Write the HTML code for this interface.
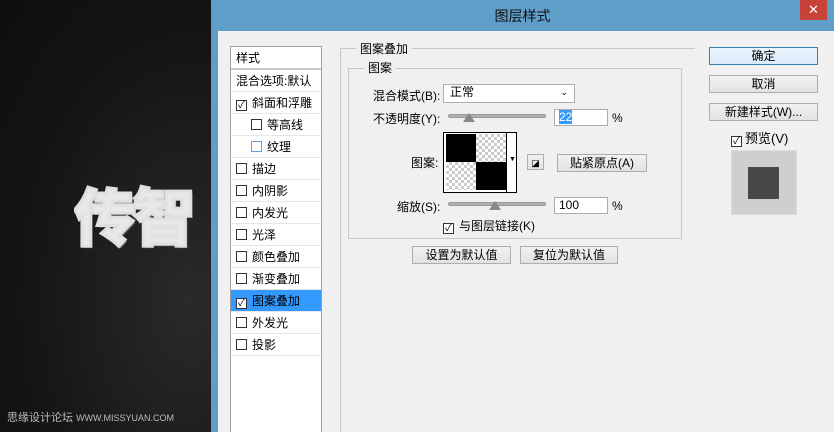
<!DOCTYPE html>
<html><head><meta charset="utf-8"><style>
*{margin:0;padding:0;box-sizing:border-box}
body{width:834px;height:432px;overflow:hidden;position:relative;background:#161616;font-family:"Liberation Sans","Noto Sans CJK SC",sans-serif;font-size:12px;color:#000}
.a{position:absolute}
.bg{left:0;top:0;width:211px;height:432px;background:radial-gradient(ellipse at 90% 70%,#2a2a2a,#151515 60%,#0e0e0e)}
.big{left:74px;top:168px;font-size:62px;font-weight:900;color:#e8e8e8;letter-spacing:-3px;font-family:"Noto Sans CJK SC",sans-serif;-webkit-text-stroke:3px #e0e0e0;text-shadow:2px 2px 0 #666;width:137px;overflow:hidden;white-space:nowrap}
.wm{left:7px;top:409px;color:#bbb;font-size:11px;white-space:nowrap}
.dlg{left:211px;top:0;width:623px;height:432px;background:#5e9ec9}
.title{left:211px;top:6px;width:623px;text-align:center;font-size:14px;color:#111}
.close{left:800px;top:0;width:27px;height:20px;background:#c7433a;color:#fff;text-align:center;font-size:13px;line-height:20px}
.cont{left:218px;top:31px;width:616px;height:401px;background:#f0f0f0}
.list{left:230px;top:46px;width:92px;height:386px;background:#fff;border:1px solid #a0a0a0;border-bottom:none}
.row{position:absolute;left:0;width:90px;height:22px;line-height:22px;padding-left:5px;border-bottom:1px solid #e6e6e6;white-space:nowrap;font-size:12px}
.cb{display:inline-block;width:11px;height:11px;border:1px solid #333;background:#fff;vertical-align:-1px;margin-right:5px;font-size:10px;line-height:9px;text-align:center}
.sel{background:#3399ff}
fieldset{position:absolute;border:1px solid #c8c8c8}
.lg{position:absolute;background:#f0f0f0;padding:0 4px;font-size:12px}
.btn{position:absolute;border:1px solid #adadad;background:linear-gradient(#f2f2f2,#e2e2e2);text-align:center;font-size:12px;line-height:16px}
.inp{position:absolute;background:#fff;border:1px solid #abadb3;font-size:12px;line-height:15px;padding-left:4px}
.slider{position:absolute;height:4px;background:#b0b0b0;border:1px solid #999;border-radius:2px}
.thumb{position:absolute;width:0;height:0;border-left:6px solid transparent;border-right:6px solid transparent;border-bottom:9px solid #888}
.chk{background:repeating-conic-gradient(#ccc 0 25%,#fff 0 50%) 0 0/6px 6px}
</style></head><body>
<div class="a bg"></div>
<div class="a big">传智</div>
<div class="a wm">思缘设计论坛 <span style="font-size:9px">WWW.MISSYUAN.COM</span></div>
<div class="a dlg"></div>
<div class="a title">图层样式</div>
<div class="a close">✕</div>
<div class="a cont"></div>
<div class="a list">
<div class="row" style="top:0;height:23px;border-bottom:2px solid #ccc">样式</div>
<div class="row" style="top:23px">混合选项:默认</div>
<div class="row" style="top:45px"><span class="cb">✓</span>斜面和浮雕</div>
<div class="row" style="top:67px;padding-left:20px"><span class="cb"></span>等高线</div>
<div class="row" style="top:89px;padding-left:20px"><span class="cb" style="border-color:#6aa0d8"></span>纹理</div>
<div class="row" style="top:111px"><span class="cb"></span>描边</div>
<div class="row" style="top:133px"><span class="cb"></span>内阴影</div>
<div class="row" style="top:155px"><span class="cb"></span>内发光</div>
<div class="row" style="top:177px"><span class="cb"></span>光泽</div>
<div class="row" style="top:199px"><span class="cb"></span>颜色叠加</div>
<div class="row" style="top:221px"><span class="cb"></span>渐变叠加</div>
<div class="row sel" style="top:243px"><span class="cb">✓</span>图案叠加</div>
<div class="row" style="top:265px"><span class="cb"></span>外发光</div>
<div class="row" style="top:287px"><span class="cb"></span>投影</div>
</div>
<div class="a" style="left:340px;top:48px;width:355px;height:1px;background:#c8c8c8"></div>
<div class="a" style="left:340px;top:48px;width:1px;height:384px;background:#c8c8c8"></div>
<div class="lg" style="left:356px;top:40px">图案叠加</div>
<fieldset style="left:348px;top:68px;width:334px;height:171px"></fieldset>
<div class="lg" style="left:364px;top:59px">图案</div>
<div class="a" style="left:373px;top:87px">混合模式(B):</div>
<div class="inp" style="left:443px;top:84px;width:132px;height:19px;padding-left:6px">正常<span style="position:absolute;right:6px;top:0;font-size:9px">⌄</span></div>
<div class="a" style="left:373px;top:110px">不透明度(Y):</div>
<div class="slider" style="left:448px;top:114px;width:98px"></div>
<div class="thumb" style="left:463px;top:113px"></div>
<div class="inp" style="left:554px;top:109px;width:54px;height:17px"><span style="background:#3399ff;color:#fff">22</span></div>
<div class="a" style="left:612px;top:111px">%</div>
<div class="a" style="left:411px;top:154px">图案:</div>
<div class="a" style="left:443px;top:132px;width:74px;height:61px;border:1px solid #000;background:#fff"></div>
<div class="a" style="left:446px;top:134px;width:60px;height:56px">
<div class="a" style="left:0;top:0;width:30px;height:28px;background:#000"></div>
<div class="a chk" style="left:30px;top:0;width:30px;height:28px"></div>
<div class="a chk" style="left:0;top:28px;width:30px;height:28px"></div>
<div class="a" style="left:30px;top:28px;width:30px;height:28px;background:#000"></div>
</div>
<div class="a" style="left:506px;top:132px;width:1px;height:61px;background:#000"></div>
<div class="a" style="left:509px;top:156px;font-size:7px">▼</div>
<div class="btn" style="left:527px;top:154px;width:17px;height:16px;font-size:9px">◪</div>
<div class="btn" style="left:557px;top:154px;width:90px;height:18px">贴紧原点(A)</div>
<div class="a" style="left:397px;top:198px">缩放(S):</div>
<div class="slider" style="left:448px;top:202px;width:98px"></div>
<div class="thumb" style="left:489px;top:201px"></div>
<div class="inp" style="left:554px;top:197px;width:54px;height:17px">100</div>
<div class="a" style="left:612px;top:199px">%</div>
<div class="a" style="left:443px;top:217px"><span class="cb">✓</span>与图层链接(K)</div>
<div class="btn" style="left:412px;top:246px;width:99px;height:18px">设置为默认值</div>
<div class="btn" style="left:520px;top:246px;width:98px;height:18px">复位为默认值</div>
<div class="btn" style="left:709px;top:47px;width:109px;height:18px;border-color:#3c7fb1;background:linear-gradient(#eaf4fb,#dcecfc)">确定</div>
<div class="btn" style="left:709px;top:75px;width:109px;height:18px">取消</div>
<div class="btn" style="left:709px;top:103px;width:109px;height:18px">新建样式(W)...</div>
<div class="a" style="left:731px;top:128px;font-size:13px"><span class="cb" style="margin-right:3px">✓</span>预览(V)</div>
<div class="a" style="left:731px;top:150px;width:66px;height:65px;background:#cfcfcf;border:1px solid #ddd"></div>
<div class="a" style="left:748px;top:167px;width:31px;height:32px;background:#484848"></div>
</body></html>
